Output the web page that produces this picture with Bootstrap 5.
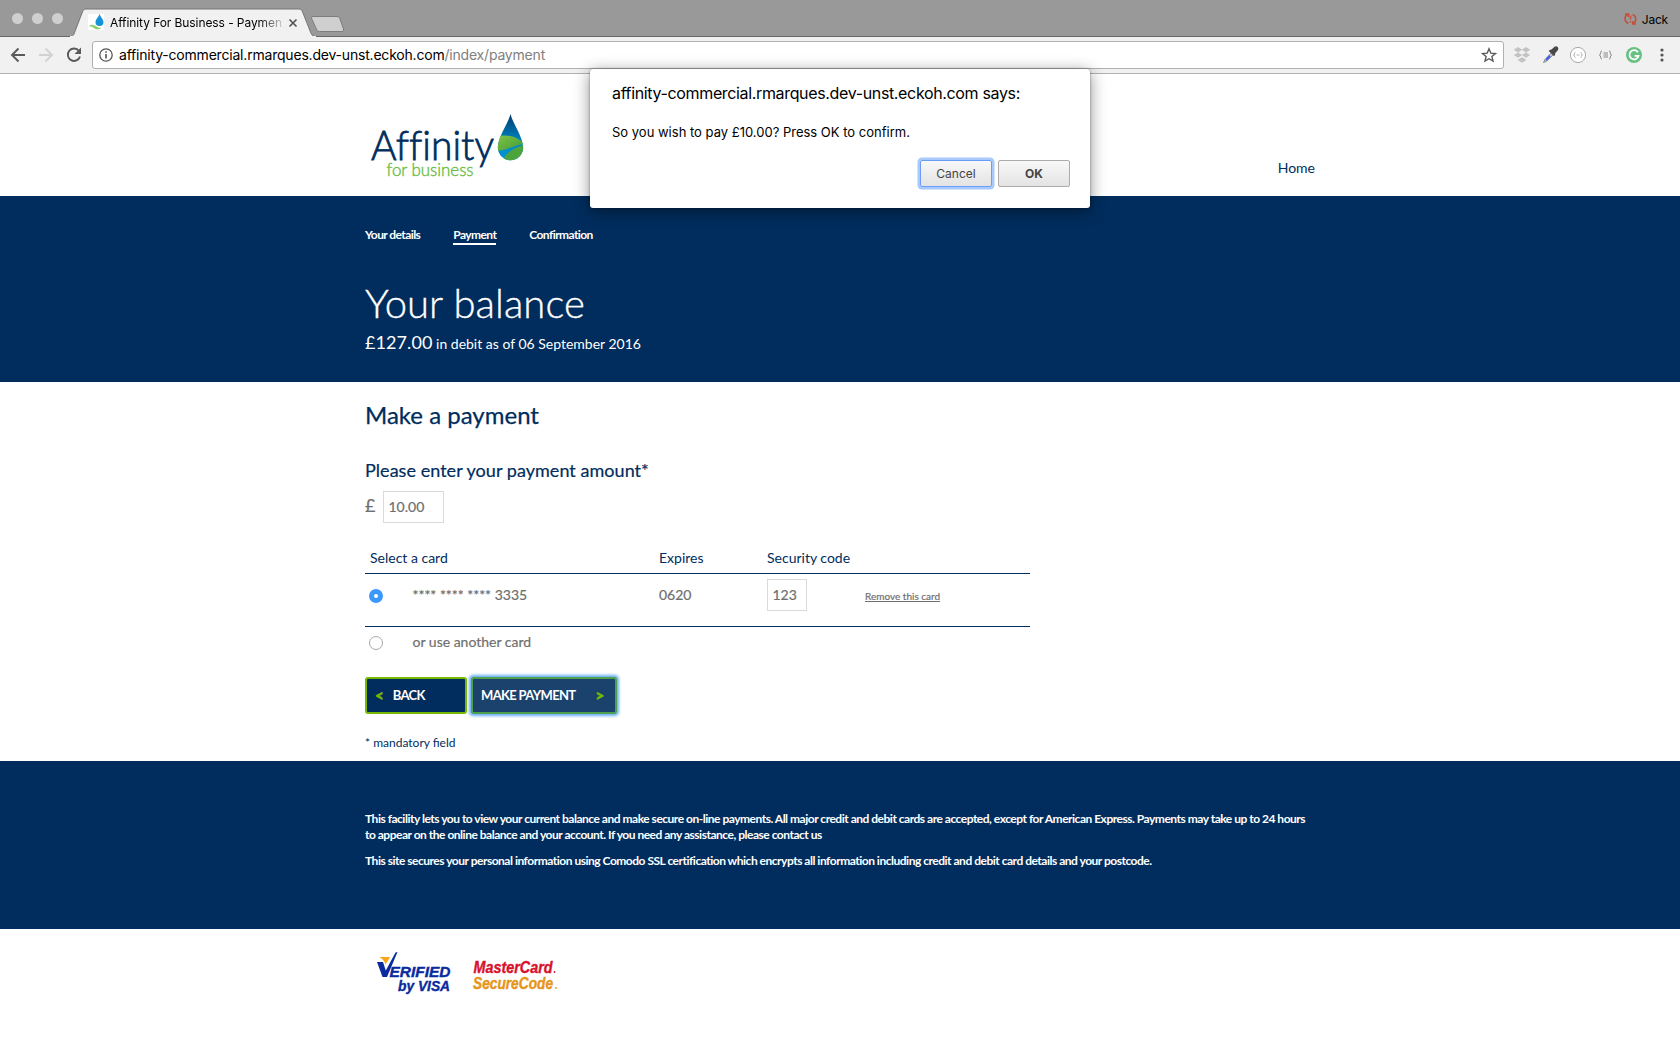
<!DOCTYPE html>
<html lang="en">
<head>
<meta charset="utf-8">
<title>Affinity For Business - Payment</title>
<link href="https://cdn.jsdelivr.net/npm/bootstrap@5.3.0/dist/css/bootstrap.min.css" rel="stylesheet">
<style>
:root{--navy:#002d5d;--lime:#76b900}
body{font-family:Lato,sans-serif;font-size:14px;line-height:20px;color:var(--navy);background:#fff;overflow:hidden}
.browser-font{font-family:Inter,Roboto,sans-serif;color:#000}
.tabstrip{height:37px;background:#999;border-bottom:1px solid #686868;position:relative}
.lights{padding:13px 0 0 12px;gap:9.2px}
.lights i{width:11px;height:11px;border-radius:50%;background:#cfcfcf}
.tab-shape{position:absolute;left:0;top:0;z-index:1}
.tab-body{position:absolute;left:88px;top:14px;z-index:2}
.tab-title{width:173px;margin-left:6px;font-size:12px;letter-spacing:-.08px;line-height:18px;white-space:nowrap;-webkit-mask-image:linear-gradient(90deg,#000 86%,transparent 102%);mask-image:linear-gradient(90deg,#000 86%,transparent 102%)}
.profile{font-size:12px;letter-spacing:-.2px;padding:10px 12px 0 0;gap:5px}
.toolbar-row{height:37px;background:#f1f1f1;border-bottom:1px solid #b2b2b2;padding:0 8px 0 10px}
.omnibox{width:1412px;height:28px;margin-left:10px;background:#fff;border:1px solid #b0b0b0;border-radius:3px;padding:0 6px 0 6px}
.url{font-size:14px;letter-spacing:-.2px;margin-left:6px}
.url span{color:#808080}
.page-wrap{width:950px;margin:0 auto}
.site-head{height:122px}
.brand-logo{margin:34px 0 0 0}
.home-link{color:var(--navy);text-decoration:none;margin-top:83.5px;line-height:20px}
.hero{background:var(--navy);color:#fff;height:186px;padding-top:29px}
.steps{gap:33px}
.steps a{color:#fff;text-decoration:none;font-weight:700;font-size:12px;line-height:19px;letter-spacing:-.58px;height:20px}
.steps a.current{border-bottom:2px solid #fff}
.hero h1{font-weight:300;font-size:40px;line-height:48px;margin:34px 0 3px;letter-spacing:.08px;-webkit-text-stroke:.35px #fff}
.hero p{line-height:24px}
.hero .amount{font-size:18px;letter-spacing:.08px}
.pay{height:379px;padding-top:18px}
.pay h2{font-size:24px;line-height:30px;font-weight:400;margin:0 0 29px;-webkit-text-stroke:.25px}
.pay label{font-size:18px;line-height:22px;letter-spacing:.04px;display:block;margin-bottom:10px;-webkit-text-stroke:.2px}
.grey{color:#6f6f6f;-webkit-text-stroke:.2px}
.pound{font-size:18px;line-height:22px;width:18px;padding-top:3px}
.box{border:1px solid #d5dada;border-radius:0;height:32px;padding:0 5px 2px 4.5px;color:#6f6f6f;font-size:14px;line-height:20px;box-shadow:none;-webkit-text-stroke:.2px}
.box.sum{width:61px}
.box.cvv{width:40px;margin-top:5px}
.cards{width:665px;margin-top:25px}
.card-line{display:grid;grid-template-columns:47.5px 246.5px 108px 98px 1fr;align-items:start}
.card-line.top{grid-template-columns:294px 108px 1fr;padding:0 0 5px 0;border-bottom:1px solid var(--navy)}
.card-line.saved{height:53px;border-bottom:1px solid var(--navy)}
.card-line.saved .txt{margin-top:10.5px}
.remove{font-size:10px;color:#6f6f6f;margin-top:11.5px;text-decoration:underline}
.dot{appearance:none;width:14px;height:14px;border-radius:50%;margin:15px 0 0 4px;border:1px solid #a9a9a9;background:#fff;display:block}
.dot:checked{border:5px solid #3b99fc;background:#fff}
.act{height:37px;border:2px solid var(--lime);border-radius:3px;background:var(--navy);color:#fff;font-weight:700;font-size:13px;line-height:20px;letter-spacing:-.65px;padding:0 0 1px 8px;display:flex;align-items:center}
.act:hover{background:var(--navy);color:#fff;border-color:var(--lime)}
.act b{color:var(--lime);font-weight:900;font-size:15px;letter-spacing:0;-webkit-text-stroke:.6px var(--lime)}
.act.hot{background:#1a426d;border-color:#4fa04c;box-shadow:0 0 3px 1.5px #69aef5}
.note{font-size:12px;line-height:16px;margin-top:21px}
.foot{background:var(--navy);color:#fff;height:168px;padding-top:50px;font-weight:700;font-size:12px;line-height:16px;letter-spacing:-.489px}
.foot p{margin:0 0 10px;white-space:nowrap}
.foot a{color:#fff;text-decoration:none}
.ask{position:absolute;left:590px;top:69px;width:500px;height:139px;background:#fff;border-radius:3px;box-shadow:0 3px 16px rgba(0,0,0,.45),0 0 2px rgba(0,0,0,.5);padding:14px 20px 0 22px;z-index:5}
.ask .who{font-size:16px;line-height:20px;letter-spacing:-.35px}
.ask .what{font-size:13px;line-height:18px;margin-top:20px}
.ask button{width:72px;height:27px;border:1px solid #acacac;border-radius:2px;background:linear-gradient(#f8f8f8,#e3e3e3);font-size:12px;line-height:16px;color:#444;padding:0}
.ask button.sel{border-color:#6a9df8;box-shadow:0 0 0 2.5px #a9c8fb}
</style>
</head>
<body>
<div class="browser-font">
  <div class="tabstrip d-flex justify-content-between">
    <div class="lights d-flex"><i></i><i></i><i></i></div>
    <svg class="tab-shape" width="360" height="37"><path d="M70 37C74 36 74 34 75.500 30L82 13C83.500 9.500 84 9 87 9H298C301 9 301.500 9.500 303 13L310.500 32C312 35.500 312.500 36 316 37Z" fill="#f1f1f1" stroke="#747474"/><path d="M70 37H316V36H70Z" fill="#f1f1f1"/><path d="M313 16.500H337Q339 16.500 339.700 18L343.500 29Q344 31.500 342 31.500H319.500Q317.500 31.500 316.800 30L311.600 18.500Q311 16.500 313 16.500Z" fill="#cfcfcf" stroke="#7d7d7d"/></svg>
    <div class="tab-body d-flex">
      <svg width="16" height="16" viewBox="0 0 16 16"><rect width="16" height="16" fill="#fff"/><path d="M11.500 0C12.500 3 15.500 5.500 15.500 8a4 4 0 0 1-8 0c0-2.500 3-5 4-8Z" fill="#1593d6"/><path d="M.5 12.500C3 9.500 6 11 8.500 12.500S12 14 13.500 13.500C11 16.500 8 15.500 5.500 13.800S2 12 .5 12.500Z" fill="#8ccf6b"/></svg>
      <div class="tab-title">Affinity For Business - Paymen</div>
      <svg width="12" height="18" viewBox="0 0 12 18" style="margin-left:4px"><path d="M1.500 5.500l7 7M8.500 5.500l-7 7" transform="translate(1 0)" stroke="#555" stroke-width="1.700" fill="none"/></svg>
    </div>
    <div class="profile d-flex">
      <svg width="13" height="18" viewBox="0 1 13 18" fill="none" stroke="#c4503c" stroke-width="1.500"><path d="M4.300 14.500C0 12.500 0 7.500 3.500 5.500M1 5h3.500v3M8.700 5.500c4 2 4 7 .800 9M12 15H8.800v-3M6.500 6.500v4M6.500 12v1.500"/></svg>
      <span>Jack</span>
    </div>
  </div>
  <div class="toolbar-row d-flex align-items-center">
    <svg width="72" height="18" viewBox="0 0 72 18" fill="none" stroke-width="1.900"><path d="M15 9H2.500M8.500 2.500L2 9l6.500 6.500" stroke="#5a5a5a"/><path d="M29 9h12.500M35.500 2.500L42 9l-6.500 6.500" stroke="#d2d2d2"/><path d="M69 5A6.200 6.200 0 1 0 70 10.500" stroke="#5a5a5a"/><path d="M71 1.500V8h-6.500Z" fill="#5a5a5a"/></svg>
    <div class="omnibox d-flex align-items-center">
      <svg width="14" height="14" viewBox="0 0 14 14" fill="none" stroke="#555"><circle cx="7" cy="7" r="6.200" stroke-width="1.300"/><path d="M7 6v4.500M7 3.300v1.500" stroke-width="1.600"/></svg>
      <div class="url flex-grow-1">affinity-commercial.rmarques.dev-unst.eckoh.com<span>/index/payment</span></div>
      <svg width="16" height="16" viewBox="0 0 16 16"><path d="M8 1.800l1.800 4.300 4.700.4-3.600 3 1.100 4.600L8 11.700l-4 2.400 1.100-4.600-3.600-3 4.700-.4Z" fill="none" stroke="#5a5a5a" stroke-width="1.400"/></svg>
    </div>
    <svg width="158" height="20" viewBox="1510 0 158 20" style="margin-left:6px">
      <g fill="#c3c3c3"><path d="M1518 2l4.200 2.700-4.200 2.700-4.200-2.700ZM1526 2l4.200 2.700-4.200 2.700-4.200-2.700ZM1518 7.400l4.200 2.700-4.200 2.700-4.200-2.700ZM1526 7.400l4.200 2.700-4.200 2.700-4.200-2.700ZM1522 12.200l4.500 2.700-4.500 2.900-4.500-2.900Z"/></g>
      <path d="M1552 7l-7 7.500-1.500 3 3-1.200 7.500-7.300Z" fill="#b8c4f0" stroke="#777" stroke-width=".8"/><path d="M1550 11l-4 4" stroke="#3d5be0" stroke-width="2"/><path d="M1549.500 5l2-.5 3-2.700q2-1 3.200.3t.2 3.200l-2.600 2.800-.5 2.500-1 .4-5-5Z" fill="#484848"/>
      <circle cx="1578" cy="10" r="7.600" fill="#fff" stroke="#aaa"/><path d="M1575.500 7.500q-1.200 0-1 1.200 0 1.200-1 1.300 1 .1 1 1.300 0 1.200 1 1.200M1580.500 7.500q1.200 0 1 1.200 0 1.200 1 1.300-1 .1-1 1.300 0 1.200-1 1.200M1576.500 10h3" fill="none" stroke="#aaa" stroke-width=".9"/>
      <path d="M1602 6q-1.500 0-1.300 1.500 0 2.300-1.400 2.500 1.400.2 1.400 2.500 0 1.500 1.300 1.500M1609 6q1.500 0 1.300 1.500 0 2.300 1.400 2.500-1.400.2-1.400 2.500 0 1.500-1.300 1.500M1603.500 8h4.500M1603.500 10h4.500M1603.500 12h4.500" fill="none" stroke="#888"/>
      <circle cx="1634" cy="10" r="8" fill="#69c083"/><path d="M1638 7.300a4.600 4.600 0 1 0 .6 3.500h-4" fill="none" stroke="#fff" stroke-width="1.700"/>
      <g fill="#555"><circle cx="1662" cy="5" r="1.600"/><circle cx="1662" cy="10" r="1.600"/><circle cx="1662" cy="15" r="1.600"/></g>
    </svg>
  </div>
</div>

<header class="site-head">
  <div class="page-wrap d-flex justify-content-between align-items-start">
    <svg class="brand-logo" width="170" height="80" viewBox="365 108 170 80">
      <defs><linearGradient id="drop" x1="0" y1="0" x2="0" y2="1"><stop offset="0" stop-color="#003a6c"/><stop offset=".6" stop-color="#0085c3"/><stop offset="1" stop-color="#0099d8"/></linearGradient>
      <linearGradient id="leaf" x1="0" y1="0" x2="1" y2="1"><stop offset="0" stop-color="#83c341"/><stop offset="1" stop-color="#3d9a3c"/></linearGradient>
      <clipPath id="dc"><path d="M510.500 114C513 124 523.200 137 523.200 147.500a12.700 12.700 0 0 1-25.400 0C497.800 137 508 124 510.500 114Z"/></clipPath></defs>
      <text x="371" y="160" textLength="123" lengthAdjust="spacingAndGlyphs" font-family="Lato" font-size="42" font-weight="300" fill="#002d5d" stroke="#002d5d" stroke-width=".8" style="font-variant-ligatures:none">Affinity</text>
      <text x="386.500" y="176" textLength="87" lengthAdjust="spacingAndGlyphs" font-family="Lato" font-weight="300" font-size="17" fill="#6cbd45" stroke="#6cbd45" stroke-width=".4">for business</text>
      <g clip-path="url(#dc)"><rect x="497" y="113" width="27" height="48" fill="url(#drop)"/><path d="M497 137C506 133 518 137 524 144C515 145 508 150 497 151Z" fill="url(#leaf)"/><path d="M524 145C513 148 505 153 503 161H524Z" fill="#4da43c"/></g>
    </svg>
    <a class="home-link" href="#">Home</a>
  </div>
</header>

<section class="hero"><div class="page-wrap">
  <nav class="steps d-flex"><a href="#">Your details</a><a class="current" href="#">Payment</a><a href="#">Confirmation</a></nav>
  <h1>Your balance</h1>
  <p class="mb-0"><span class="amount">£127.00</span> in debit as of 06 September 2016</p>
</div></section>

<main class="pay"><div class="page-wrap">
  <h2>Make a payment</h2>
  <label for="sum">Please enter your payment amount*</label>
  <div class="d-flex"><span class="pound grey">£</span><input id="sum" class="box sum" value="10.00"></div>
  <div class="cards">
    <div class="card-line top"><span style="padding-left:5px">Select a card</span><span>Expires</span><span>Security code</span></div>
    <div class="card-line saved grey"><input class="dot" type="radio" name="c" checked><span class="txt">**** **** **** 3335</span><span class="txt">0620</span><input class="box cvv" value="123"><a class="remove" href="#">Remove this card</a></div>
    <div class="card-line grey"><input class="dot" style="margin-top:9px" type="radio" name="c"><span style="margin-top:5px">or use another card</span></div>
  </div>
  <div class="d-flex" style="margin-top:25px;gap:4px">
    <button class="btn act" style="width:102px"><b style="margin-right:9px">&lt;</b>BACK</button>
    <button class="btn act hot" style="width:146px;padding-left:8px">MAKE PAYMENT<b style="margin-left:20px">&gt;</b></button>
  </div>
  <div class="note">* mandatory field</div>
</div></main>

<footer class="foot"><div class="page-wrap">
  <p>This facility lets you to view your current balance and make secure on-line payments. All major credit and debit cards are accepted, except for American Express. Payments may take up to 24 hours<br>to appear on the online balance and your account. If you need any assistance, please <a href="#">contact us</a></p>
  <p>This site secures your personal information using Comodo SSL certification which encrypts all information including credit and debit card details and your postcode.</p>
</div></footer>
<div class="page-wrap">
  <svg width="220" height="80" viewBox="365 929 220 80" font-family="Liberation Sans" font-weight="700" font-style="italic" stroke-width=".4">
    <path d="M379 957H390L385.500 964.500Q384 959 379 957Z" fill="#f9a51a"/>
    <path d="M377 962H383L385.800 970.500L395.500 952.500L397.500 952L387 977H382.500Z" fill="#0a2a9e"/>
    <text x="389.500" y="976.700" font-size="15.500" textLength="61" lengthAdjust="spacingAndGlyphs" fill="#0a2a9e" stroke="#0a2a9e">ERIFIED</text>
    <text x="398" y="990.700" font-size="15.500" textLength="52" lengthAdjust="spacingAndGlyphs" fill="#0a2a9e" stroke="#0a2a9e">by VISA</text>
    <text x="473.500" y="972.700" font-size="17" textLength="79" lengthAdjust="spacingAndGlyphs" fill="#d8122e" stroke="#d8122e">MasterCard</text>
    <text x="473" y="989.300" font-size="17" textLength="80" lengthAdjust="spacingAndGlyphs" fill="#e6951b" stroke="#e6951b">SecureCode</text>
    <circle cx="554.500" cy="972" r=".9" fill="#d8122e"/><circle cx="556" cy="988" r=".9" fill="#e6951b"/>
  </svg>
</div>

<div class="ask browser-font" role="dialog">
  <div class="who">affinity-commercial.rmarques.dev-unst.eckoh.com says:</div>
  <div class="what">So you wish to pay £10.00? Press OK to confirm.</div>
  <div class="d-flex justify-content-end" style="gap:6px;margin-top:19px"><button class="sel">Cancel</button><button class="fw-bold">OK</button></div>
</div>
<script src="https://cdn.jsdelivr.net/npm/bootstrap@5.3.0/dist/js/bootstrap.bundle.min.js"></script>
</body></html>
